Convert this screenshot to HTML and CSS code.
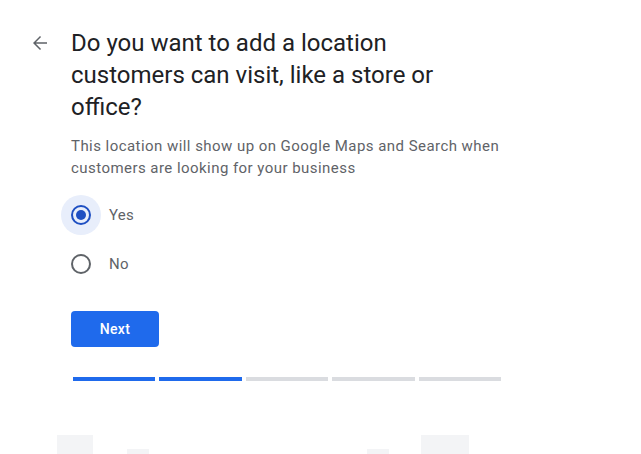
FILE: index.html
```html
<!DOCTYPE html>
<html lang="en">
<head>
<meta charset="utf-8">
<link rel="stylesheet" href="styles.css">
</head>
<body>
<div class="page">
  <div class="header">
    <button class="back" aria-label="Back">
      <svg width="16" height="16" viewBox="0 0 16 16"><path d="M15 7.25H3.87l5.2-5.2L8 1 1 8l7 7 1.06-1.06-5.19-5.19H15z" fill="#5f6368"/></svg>
    </button>
    <div class="content">
      <h1 class="title">Do you want to add a location customers can visit, like a store or office?</h1>
      <p class="subtitle">This location will show up on Google Maps and Search when customers are looking for your business</p>
      <div class="options">
        <label class="option">
          <span class="radio-wrap checked-halo"><span class="radio checked"><span class="dot"></span></span></span>
          <span class="label">Yes</span>
        </label>
        <label class="option">
          <span class="radio-wrap"><span class="radio"></span></span>
          <span class="label">No</span>
        </label>
      </div>
      <button class="next">Next</button>
      <div class="progress">
        <span class="seg done"></span>
        <span class="seg done"></span>
        <span class="seg"></span>
        <span class="seg"></span>
        <span class="seg"></span>
      </div>
    </div>
  </div>
  <div class="skeleton">
    <span class="sk sk1"></span>
    <span class="sk sk2"></span>
    <span class="sk sk3"></span>
    <span class="sk sk4"></span>
  </div>
</div>
</body>
</html>
```
FILE: styles.css
```css
* { box-sizing: border-box; }
html, body { margin: 0; padding: 0; background: #fff; }
body { font-family: Roboto, "Liberation Sans", Arial, sans-serif; color: #202124; width: 641px; height: 454px; overflow: hidden; }
.page { display: flex; flex-direction: column; height: 454px; }
.header { display: flex; align-items: flex-start; padding: 27px 0 0 24px; }
.back { width: 32px; height: 32px; border: 0; background: none; padding: 0; margin: 0 15px 0 0; display: flex; align-items: center; justify-content: center; cursor: pointer; }
.content { display: flex; flex-direction: column; width: 440px; }
.title { margin: 0; font-size: 24px; line-height: 32px; font-weight: 400; width: 380px; color: #202124; }
.subtitle { margin: 12px 0 0; font-size: 15px; line-height: 22px; letter-spacing: 0.45px; color: #5f6368; }
.options { display: flex; flex-direction: column; margin-top: 16px; margin-left: -10px; gap: 9px; }
.option { display: flex; align-items: center; gap: 8px; }
.radio-wrap { width: 40px; height: 40px; border-radius: 50%; display: flex; align-items: center; justify-content: center; }
.checked-halo { background: #e8eefb; }
.radio { width: 20px; height: 20px; border-radius: 50%; border: 2px solid #5f6368; display: flex; align-items: center; justify-content: center; }
.radio.checked { border-color: #1e4fc2; }
.dot { width: 10px; height: 10px; border-radius: 50%; background: #1e4fc2; }
.label { font-size: 15px; letter-spacing: 0.3px; color: #5f6368; }
.next { margin-top: 27px; width: 88px; height: 36px; border: 0; border-radius: 4px; background: #1f6aec; color: #fff; font-family: Roboto, "Liberation Sans", Arial, sans-serif; font-size: 14px; font-weight: 500; letter-spacing: 0.3px; padding: 0; }
.progress { display: flex; gap: 4px; margin-top: 30px; margin-left: 2px; width: 428px; }
.seg { flex: 1; height: 4px; background: #dadce0; }
.seg.done { background: #1f6aec; }
.skeleton { display: flex; align-items: flex-end; height: 19px; margin-top: 54px; padding-left: 57px; }
.sk { display: block; background: #f3f4f6; }
.sk1 { width: 36px; height: 19px; }
.sk2 { width: 22px; height: 5px; margin-left: 34px; }
.sk3 { width: 22px; height: 5px; margin-left: 218px; }
.sk4 { width: 48px; height: 19px; margin-left: 32px; }
```
